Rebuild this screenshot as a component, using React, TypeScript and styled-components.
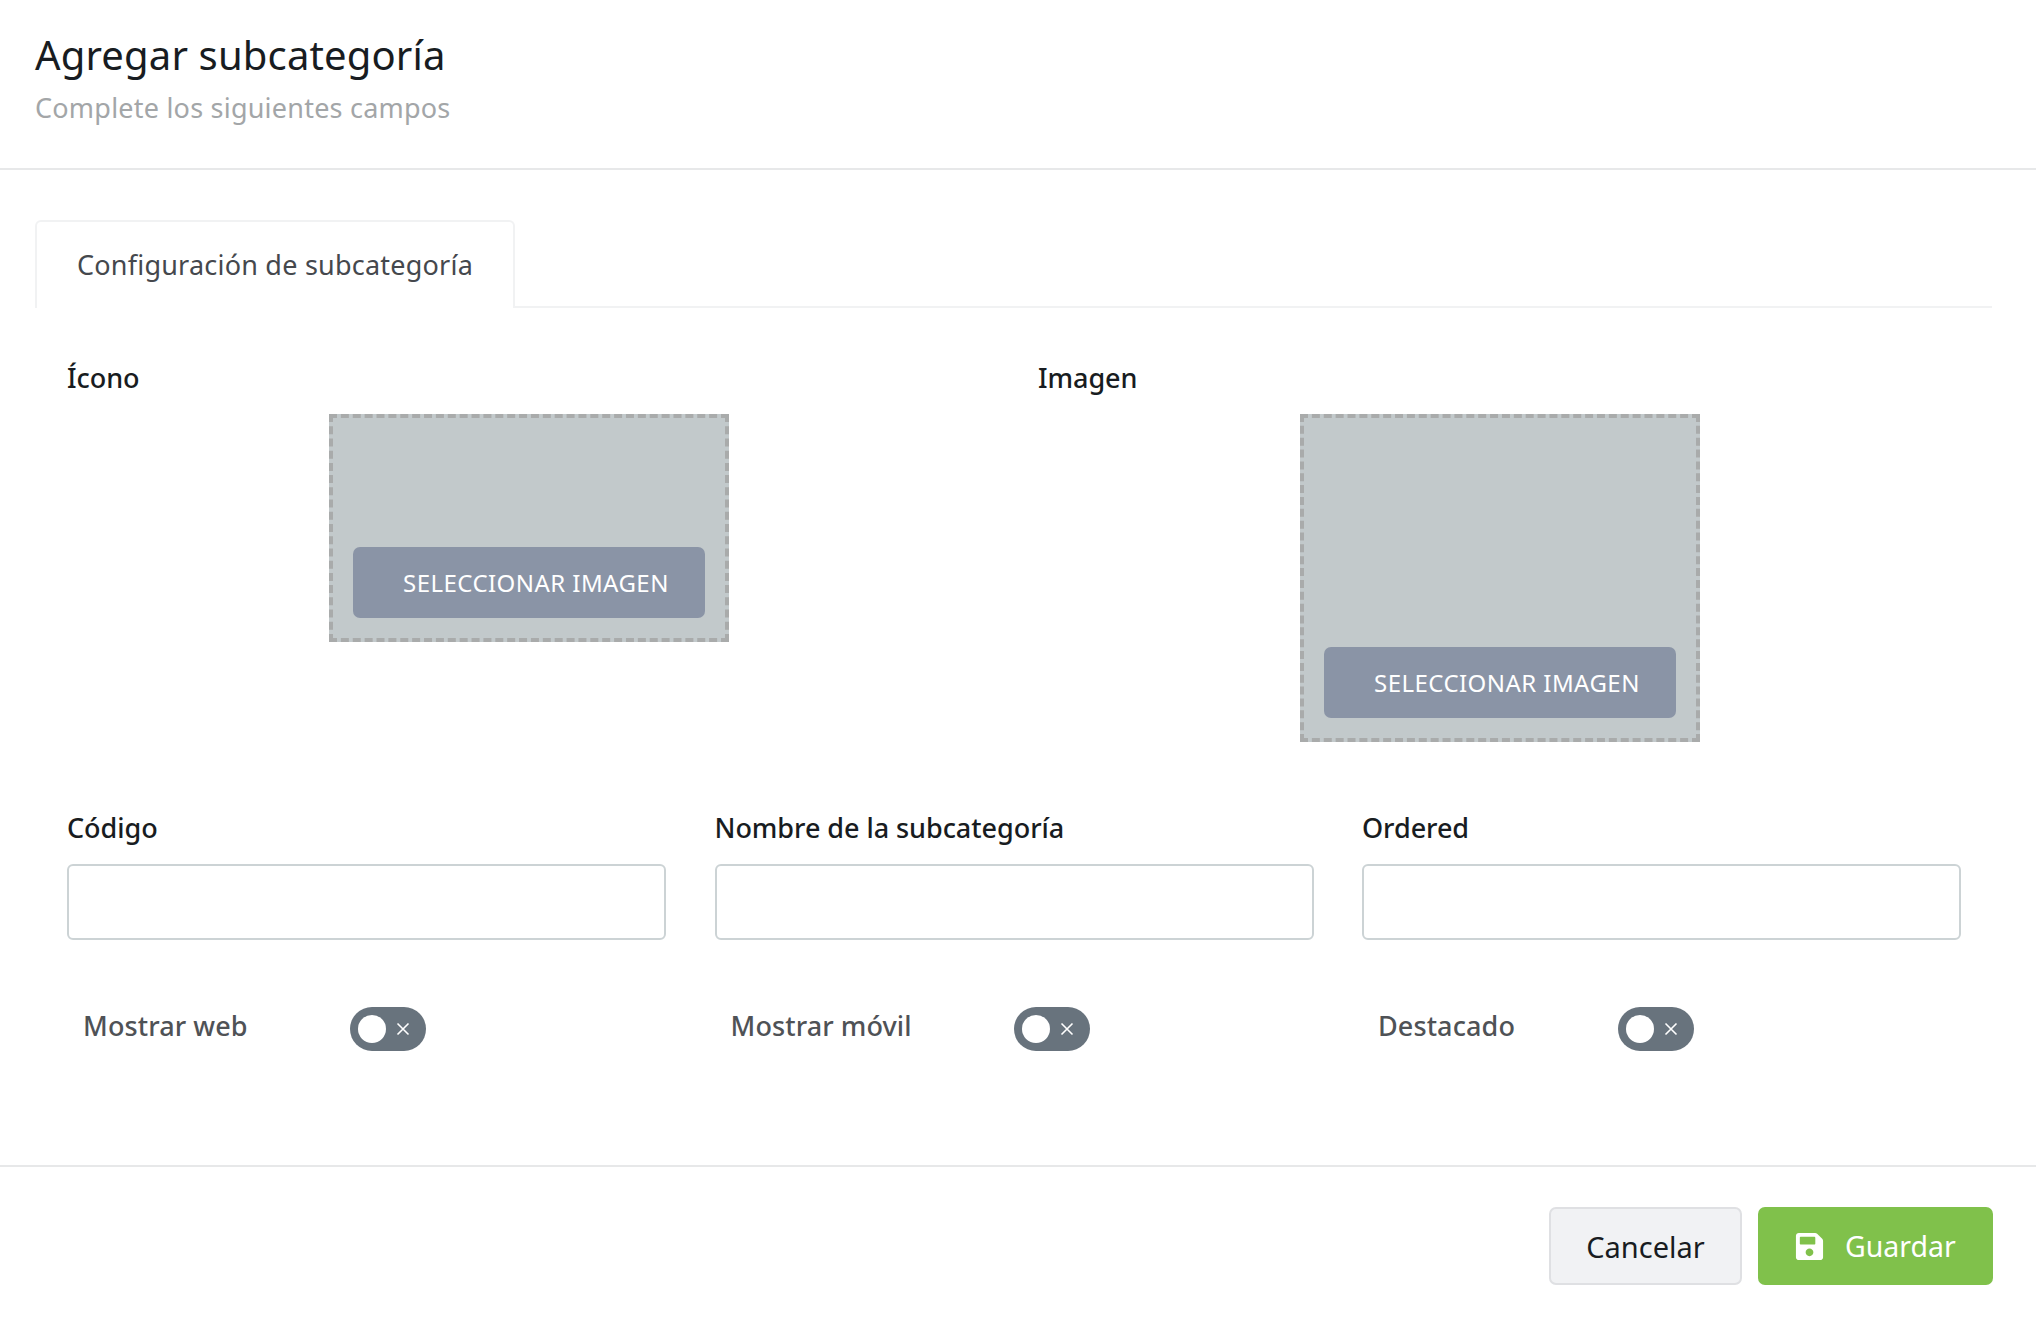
import React from "react";
import styled, { createGlobalStyle } from "styled-components";
import { FaSave } from "react-icons/fa";

const Global = createGlobalStyle`
  html, body { margin: 0; padding: 0; background: #fff; }
  body { font-family: "Noto Sans", "Open Sans", sans-serif; color: #181c21; }
  * { box-sizing: border-box; }
`;

const Page = styled.div`
  width: 2036px;
  height: 1320px;
  display: flex;
  flex-direction: column;
  background: #fff;
`;

const Header = styled.header`
  height: 170px;
  padding: 29px 35px 0;
  border-bottom: 2px solid #e7e8e9;
`;

const Title = styled.h1`
  margin: 0;
  font-size: 40px;
  line-height: 52px;
  font-weight: 400;
  letter-spacing: 0.15px;
  color: #181c21;
`;

const Subtitle = styled.p`
  margin: 9px 0 0;
  font-size: 27px;
  line-height: 36px;
  letter-spacing: 0.22px;
  color: #a3a6a8;
`;

const Body = styled.main`
  flex: 1;
  padding: 50px 44px 0 35px;
`;

const TabBar = styled.div`
  height: 88px;
  display: flex;
  border-bottom: 2px solid #f1f2f3;
`;

const Tab = styled.div`
  width: 480px;
  height: 88px;
  display: flex;
  align-items: center;
  justify-content: center;
  padding-bottom: 2px;
  font-size: 27px;
  letter-spacing: 0.22px;
  color: #45484d;
  background: #fff;
  border: 2px solid #f1f2f3;
  border-bottom: none;
  border-radius: 6px 6px 0 0;
`;

const Content = styled.div`
  padding: 0 31px 0 32px;
`;

const MediaGrid = styled.section`
  display: grid;
  grid-template-columns: 924px 924px;
  column-gap: 47px;
  height: 469px;
  padding-top: 52px;
`;

const MediaColumn = styled.div`
  display: flex;
  flex-direction: column;
`;

const FieldLabel = styled.label`
  display: block;
  height: 36px;
  font-size: 27px;
  line-height: 36px;
  font-weight: 500;
  letter-spacing: -0.05px;
  color: #181c21;
`;

const Dropzone = styled.div<{ $height: number }>`
  align-self: center;
  width: 400px;
  height: ${(p) => p.$height}px;
  margin-top: 18px;
  padding: 0 20px 20px;
  display: flex;
  align-items: flex-end;
  background: #c2c9cb;
  border: 4px dashed #a9abab;
`;

const PickButton = styled.button`
  width: 352px;
  height: 71px;
  padding: 0 0 0 50px;
  display: flex;
  align-items: center;
  border: none;
  border-radius: 7px;
  background: #8a94a6;
  color: #fff;
  font-family: inherit;
  font-size: 24px;
  letter-spacing: 0.45px;
  white-space: nowrap;
`;

const FieldGrid = styled.section`
  display: grid;
  grid-template-columns: repeat(3, 1fr);
  column-gap: 48.5px;
  padding-top: 33px;
`;

const Field = styled.div`
  display: flex;
  flex-direction: column;
`;

const TextInput = styled.input`
  width: 100%;
  height: 76px;
  margin-top: 18px;
  border: 2px solid #ccd3d5;
  border-radius: 6px;
  background: #fff;
  outline: none;
`;

const ToggleRow = styled.div`
  display: flex;
  align-items: center;
  height: 44px;
  margin-top: 67px;
  padding-left: 16px;
`;

const ToggleLabel = styled.span<{ $width: number }>`
  width: ${(p) => p.$width}px;
  font-size: 27px;
  line-height: 36px;
  font-weight: 500;
  letter-spacing: 0.1px;
  color: #4f5256;
  margin-top: -6px;
  white-space: nowrap;
`;

const Toggle = styled.span`
  position: relative;
  display: inline-flex;
  align-items: center;
  width: 76px;
  height: 44px;
  padding-left: 8px;
  border-radius: 22px;
  background: #68737d;
`;

const Knob = styled.span`
  width: 28px;
  height: 28px;
  border-radius: 50%;
  background: #fff;
`;

const ToggleCross = styled.svg`
  position: absolute;
  left: 46px;
  top: 15px;
  width: 14px;
  height: 14px;
`;

const Footer = styled.footer`
  height: 155px;
  padding: 40px 43px 0 0;
  display: flex;
  justify-content: flex-end;
  gap: 16px;
  border-top: 2px solid #e7e8e9;
`;

const CancelButton = styled.button`
  width: 193px;
  height: 78px;
  border: 2px solid #dfe0e3;
  border-radius: 7px;
  background: #f1f2f4;
  color: #181c21;
  font-family: inherit;
  font-size: 29px;
`;

const SaveButton = styled.button`
  width: 235px;
  height: 78px;
  padding: 0 0 0 36px;
  display: flex;
  align-items: center;
  gap: 20px;
  border: none;
  border-radius: 7px;
  background: #80c14b;
  color: #fff;
  font-family: inherit;
  font-size: 28.5px;
`;

const toggles = [
  { label: "Mostrar web", width: 267 },
  { label: "Mostrar móvil", width: 283 },
  { label: "Destacado", width: 240 },
];

const fields = ["Código", "Nombre de la subcategoría", "Ordered"];

function ToggleField({ label, width }: { label: string; width: number }) {
  return (
    <ToggleRow>
      <ToggleLabel $width={width}>{label}</ToggleLabel>
      <Toggle>
        <Knob />
        <ToggleCross viewBox="0 0 14 14" fill="none" stroke="#fff" strokeWidth="1.6">
          <path d="M1.5 1.5l11 11M12.5 1.5l-11 11" />
        </ToggleCross>
      </Toggle>
    </ToggleRow>
  );
}

export default function App() {
  return (
    <Page>
      <Global />
      <Header>
        <Title>Agregar subcategoría</Title>
        <Subtitle>Complete los siguientes campos</Subtitle>
      </Header>
      <Body>
        <TabBar>
          <Tab>Configuración de subcategoría</Tab>
        </TabBar>
        <Content>
          <MediaGrid>
            <MediaColumn>
              <FieldLabel>Ícono</FieldLabel>
              <Dropzone $height={228}>
                <PickButton>SELECCIONAR IMAGEN</PickButton>
              </Dropzone>
            </MediaColumn>
            <MediaColumn>
              <FieldLabel>Imagen</FieldLabel>
              <Dropzone $height={328}>
                <PickButton>SELECCIONAR IMAGEN</PickButton>
              </Dropzone>
            </MediaColumn>
          </MediaGrid>
          <FieldGrid>
            {fields.map((name, i) => (
              <Field key={name}>
                <FieldLabel>{name}</FieldLabel>
                <TextInput type="text" />
                <ToggleField {...toggles[i]} />
              </Field>
            ))}
          </FieldGrid>
        </Content>
      </Body>
      <Footer>
        <CancelButton>Cancelar</CancelButton>
        <SaveButton>
          <FaSave size={31} />
          Guardar
        </SaveButton>
      </Footer>
    </Page>
  );
}
